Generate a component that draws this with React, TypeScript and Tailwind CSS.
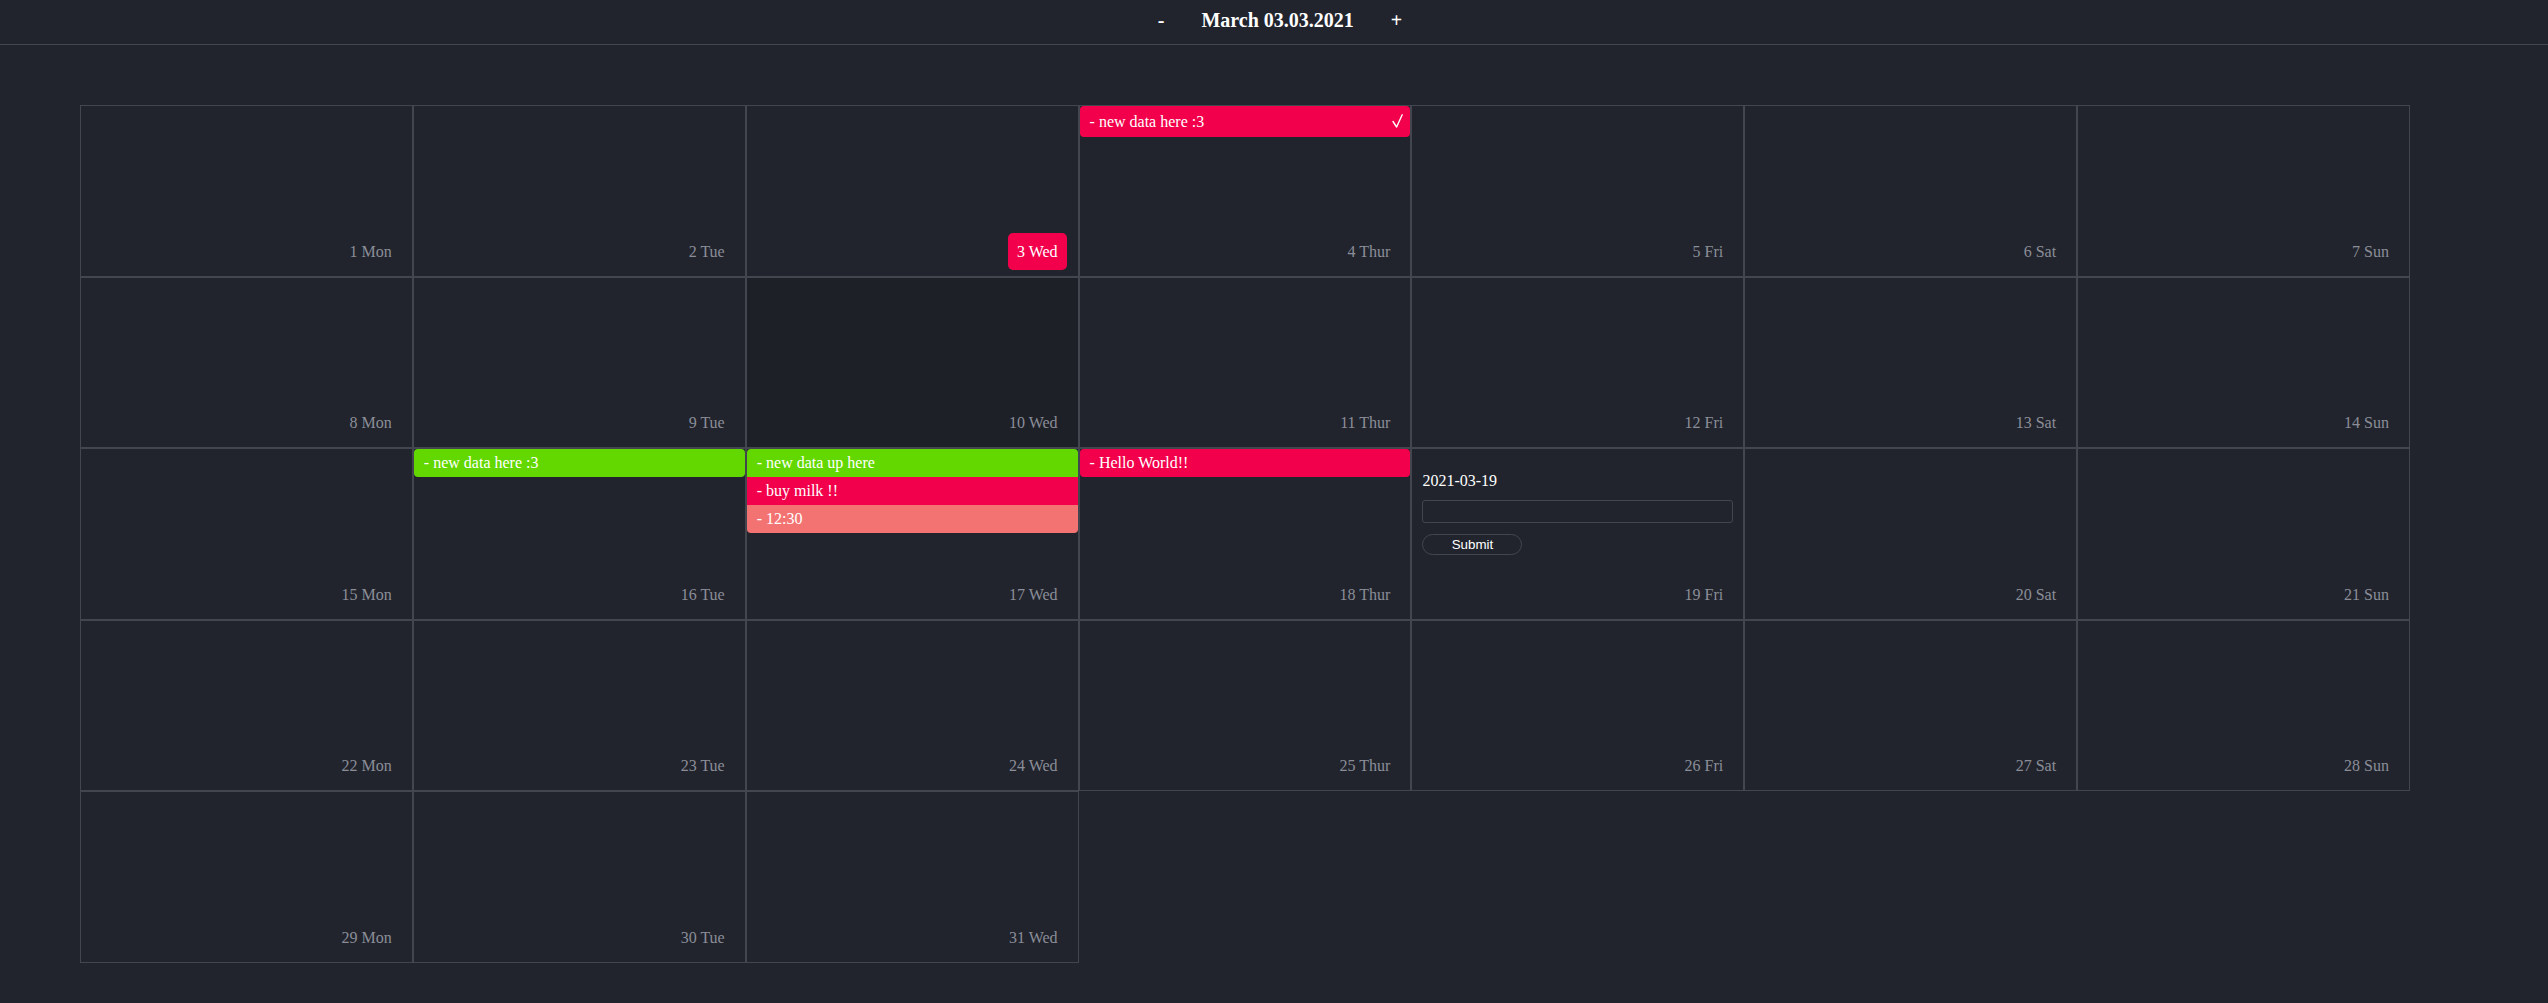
import React from 'react';

type CalEvent = {
  text: string;
  color: string;
  done?: boolean;
};

const weekdays = ['Mon', 'Tue', 'Wed', 'Thur', 'Fri', 'Sat', 'Sun'];

const events: Record<number, CalEvent[]> = {
  4: [{ text: '- new data here :3', color: 'bg-[#f2004b]', done: true }],
  16: [{ text: '- new data here :3', color: 'bg-[#63d800]' }],
  17: [
    { text: '- new data up here', color: 'bg-[#63d800]' },
    { text: '- buy milk !!', color: 'bg-[#f2004b]' },
    { text: '- 12:30', color: 'bg-[#f37373]' },
  ],
  18: [{ text: '- Hello World!!', color: 'bg-[#f2004b]' }],
};

const TODAY = 3;
const HOVERED = 10;
const FORM_DAY = 19;

const CheckMark = () => (
  <svg width="11" height="14" viewBox="0 0 11 14" fill="none" className="mb-[1px]">
    <path d="M1 7.5 L4.6 13 L10.2 0.8" stroke="white" strokeWidth="1.4" strokeLinecap="round" strokeLinejoin="round" />
  </svg>
);

const EventList: React.FC<{ items: CalEvent[] }> = ({ items }) => (
  <div className="rounded-[4px] overflow-hidden">
    {items.map((ev, i) => (
      <div
        key={i}
        className={`${ev.color} flex items-center justify-between pl-[10px] pr-[7px] text-white leading-[18px] ${ev.done ? 'h-[31px]' : 'h-[28px]'}`}
      >
        <span>{ev.text}</span>
        {ev.done && <CheckMark />}
      </div>
    ))}
  </div>
);

const AddForm: React.FC<{ date: string }> = ({ date }) => (
  <div className="px-[10px] pt-[22px]">
    <p className="text-white leading-[20px]">{date}</p>
    <input
      type="text"
      className="mt-[9px] block w-full h-[23px] rounded-[3px] border border-[#44464f] bg-transparent outline-none"
    />
    <button className="mt-[11px] block w-[100px] h-[21px] rounded-full border border-[#44464f] text-white text-[13.33px] font-['Liberation_Sans',Arial,sans-serif] leading-[19px]">
      Submit
    </button>
  </div>
);

const DayCell: React.FC<{ day: number }> = ({ day }) => {
  const name = weekdays[(day - 1) % 7];
  const items = events[day];
  const isToday = day === TODAY;

  return (
    <div
      className={`flex flex-col border border-[#44464f] ${day === HOVERED ? 'bg-[#1e2028]' : 'bg-[#21242d]'}`}
    >
      {items && <EventList items={items} />}
      {day === FORM_DAY && <AddForm date="2021-03-19" />}
      <span
        className={`mt-auto self-end mr-[11px] mb-[6px] px-[9px] py-[9px] leading-[19px] rounded-[5px] ${isToday ? 'bg-[#f2004b] text-white' : 'text-[#8b8e98]'}`}
      >
        {day} {name}
      </span>
    </div>
  );
};

export default function App() {
  const days = Array.from({ length: 31 }, (_, i) => i + 1);

  return (
    <div className="min-h-screen bg-[#21242d] font-['Liberation_Serif','Times_New_Roman',serif] text-[16px]">
      <header className="h-[45px] border-b border-[#44464f] flex items-start justify-center gap-[37px] pl-[12px] pt-[9px] text-white text-[20px] font-bold leading-[23px]">
        <button className="font-bold leading-[23px]">-</button>
        <span>March 03.03.2021</span>
        <button className="font-bold leading-[23px]">+</button>
      </header>

      <div className="ml-[80px] mt-[60px] w-[2330px] grid grid-cols-7 auto-rows-[171.6px]">
        {days.map((d) => (
          <DayCell key={d} day={d} />
        ))}
      </div>
    </div>
  );
}
